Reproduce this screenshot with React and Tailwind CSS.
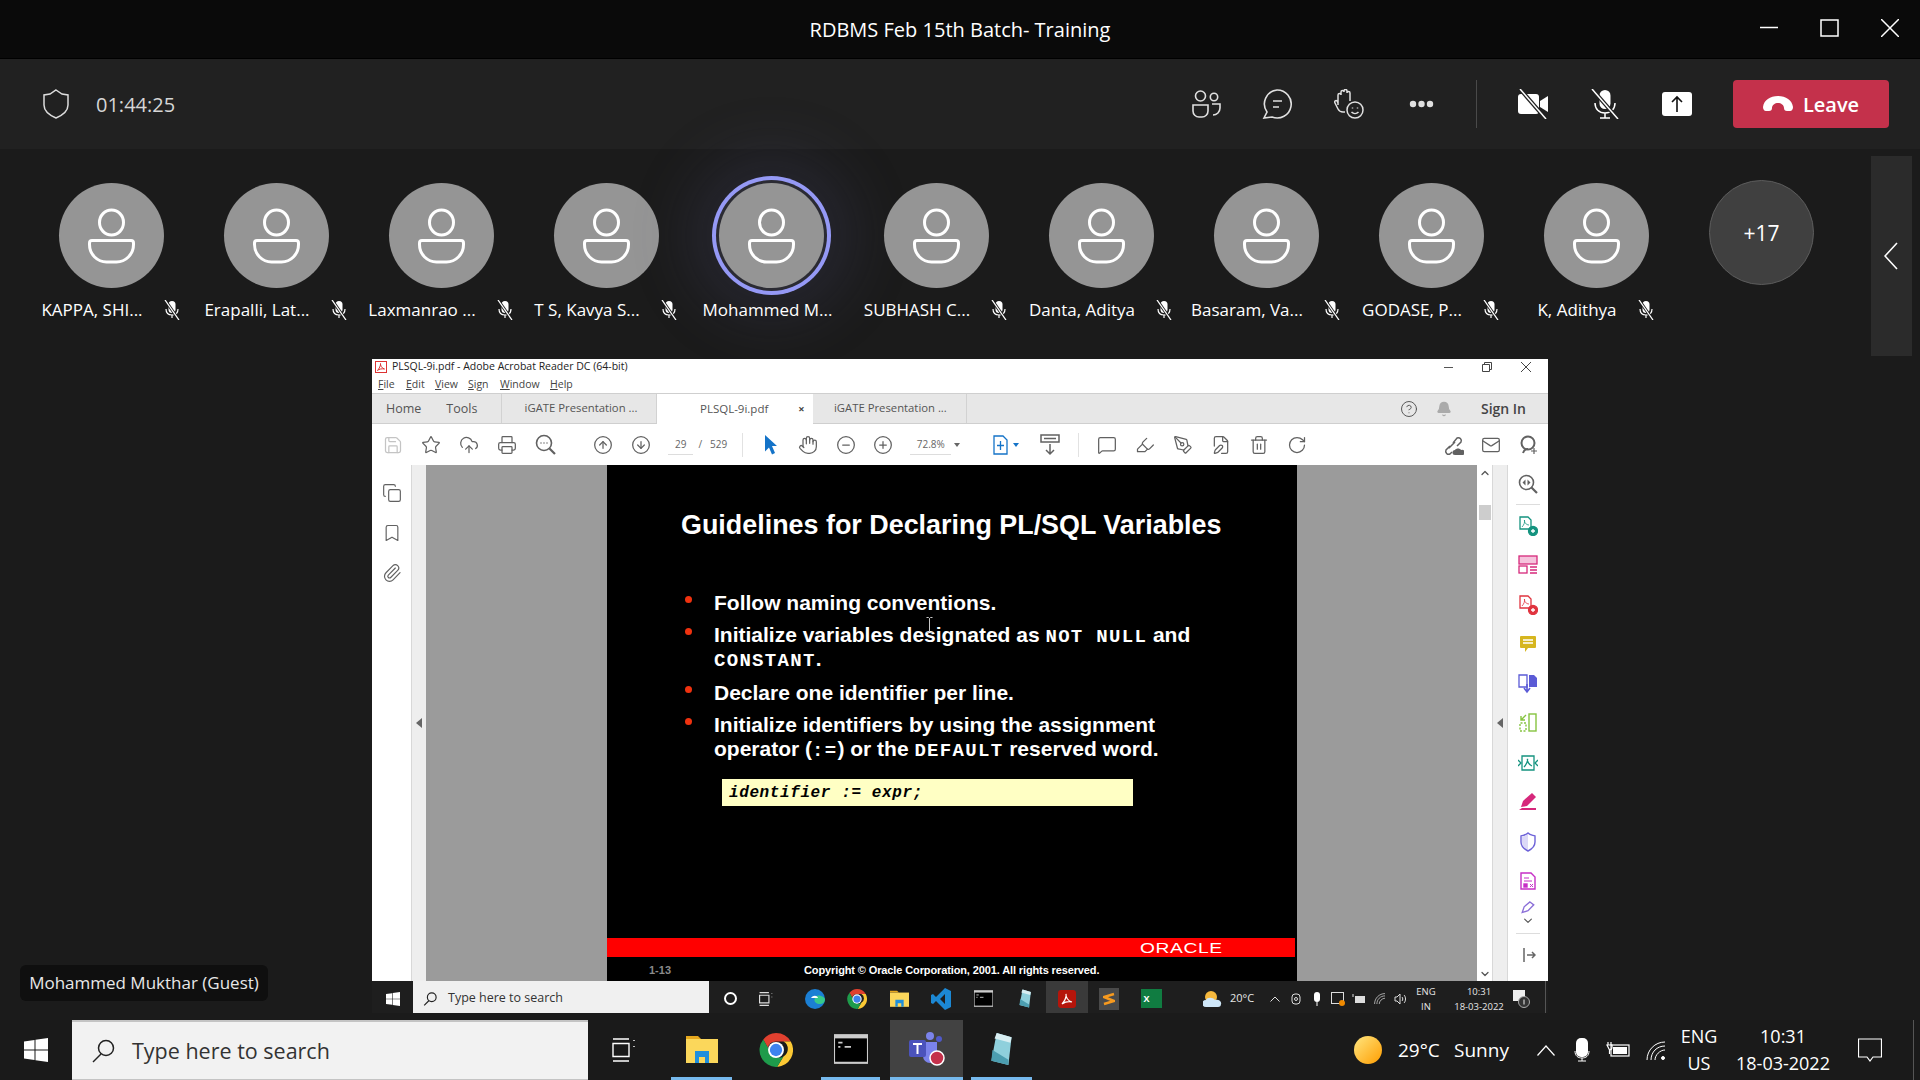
import {
  Save, Star, CloudUpload, Printer, CircleArrowUp, CircleArrowDown, Hand, CircleMinus, CirclePlus,
  MessageSquare, Highlighter, PenTool, FilePen, Trash2, RotateCw, Mail, CircleHelp, Bell, Copy, Bookmark, Paperclip,
  ChevronUp, ChevronDown,
} from 'lucide-react';

const people = ['KAPPA, SHI...', 'Erapalli, Lat...', 'Laxmanrao ...', 'T S, Kavya S...', 'Mohammed M...', 'SUBHASH C...', 'Danta, Aditya', 'Basaram, Va...', 'GODASE, P...', 'K, Adithya'];

function PersonIcon() {
  return (
    <svg width="105" height="105" viewBox="0 0 105 105" fill="none" stroke="#fff" strokeWidth="3">
      <ellipse cx="52.500" cy="39.500" rx="12" ry="12.500" />
      <path d="M33 57.500h39a2.500 2.500 0 0 1 2.500 2.500v1.500c0 10-8 17.500-17 17.500h-10c-9 0-17-7.500-17-17.500V60a2.500 2.500 0 0 1 2.500-2.500z" />
    </svg>
  );
}

function MicSmall() {
  return (
    <svg width="20" height="20" viewBox="0 0 20 20" className="shrink-0">
      <rect x="6.500" y="1" width="7" height="12" rx="3.500" fill="#fff" />
      <path d="M4 9c0 4 2.500 6 6 6s6-2 6-6M10 15v3" fill="none" stroke="#fff" strokeWidth="1.200" />
      <path d="M3 0l14 20" stroke="#1b1b1b" strokeWidth="3" />
      <path d="M3 0l14 20" stroke="#fff" strokeWidth="1.300" />
    </svg>
  );
}

function Participant({ name, active }) {
  return (
    <div className="w-[165px] shrink-0 flex flex-col items-center pt-[34px]">
      <div className={`w-[105px] h-[105px] rounded-full bg-[#959595] ${active ? 'shadow-[0_0_0_3px_#2b2b33,0_0_0_7px_#9599f5,0_0_60px_32px_rgba(90,90,140,0.18)]' : ''}`}>
        <PersonIcon />
      </div>
      <div className={`mt-[12px] h-[20px] flex items-center gap-[19px] text-[17px] text-white whitespace-nowrap ${active ? 'pr-[8px]' : ''}`}>
        <span>{name}</span>
        {!active && <MicSmall />}
      </div>
    </div>
  );
}

function TitleBar() {
  return (
    <div className="relative h-[59px] bg-[#0a0a0a] border-b border-black flex items-center justify-center">
      <span className="pt-[2px] text-[20px] text-white">RDBMS Feb 15th Batch- Training</span>
      <div className="absolute right-[21px] top-[19px] flex items-start gap-[42px]">
        <svg width="18" height="18" viewBox="0 0 18 18" stroke="#fff" strokeWidth="1.500"><path d="M0 8.500h18" /></svg>
        <svg width="19" height="18" viewBox="0 0 19 18" fill="none" stroke="#fff" strokeWidth="1.500"><rect x="1" y="1" width="17" height="16" /></svg>
        <svg width="18" height="18" viewBox="0 0 18 18" stroke="#fff" strokeWidth="1.500"><path d="M0 0l18 18M18 0L0 18" /></svg>
      </div>
    </div>
  );
}

function ToolBar() {
  return (
    <div className="h-[90px] bg-[#212121] flex items-center pl-[43px] pr-[31px]">
      <svg width="26" height="30" viewBox="0 0 26 30" fill="none" stroke="#dcdcdc" strokeWidth="1.500">
        <path d="M13 1l6 4 6 1v10c0 6-5 10-12 13C6 26 1 22 1 16V6l6-1z" />
      </svg>
      <span className="ml-[27px] pt-[2px] text-[20px] text-[#d6d6d6]">01:44:25</span>
      <div className="ml-auto flex items-center">
        <svg width="30" height="28" viewBox="0 0 30 28" fill="none" stroke="#e0e0e0" strokeWidth="1.600">
          <circle cx="9.500" cy="6" r="5" /><circle cx="23" cy="7" r="3.700" />
          <path d="M2 15h15v6a6 6 0 0 1-6 6H8a6 6 0 0 1-6-6zM21 14h8v4a7 7 0 0 1-7 7" />
        </svg>
        <svg className="ml-[41px]" width="30" height="30" viewBox="0 0 30 30" fill="none" stroke="#e0e0e0" strokeWidth="1.600">
          <path d="M15 1a14 14 0 1 1-5 27l-8 1 3-6A14 14 0 0 1 15 1zM11 12h9M11 18h6" />
        </svg>
        <svg className="ml-[42px]" width="30" height="30" viewBox="0 0 30 30" fill="none" stroke="#e0e0e0" strokeWidth="1.500">
          <path d="M4 16V6a1.500 1.500 0 0 1 3 0V3a1.500 1.500 0 0 1 3 0V2a1.500 1.500 0 0 1 3 0v2a1.500 1.500 0 0 1 3 0v8M4 14l-1-2c-1-1-3 0-2 2l3 6c1 2 3 3 5 3h2" />
          <circle cx="21" cy="21" r="8" /><path d="M17.500 23c2 2 5 2 7 0M18.500 18.500v1M23.500 18.500v1" />
        </svg>
        <svg className="ml-[45px]" width="25" height="8" viewBox="0 0 25 8" fill="#e0e0e0">
          <circle cx="4" cy="4" r="3.200" /><circle cx="12.500" cy="4" r="3.200" /><circle cx="21" cy="4" r="3.200" />
        </svg>
        <div className="ml-[42px] w-px h-[48px] bg-[#4a4a4a]" />
        <svg className="ml-[41px]" width="30" height="30" viewBox="0 0 30 30">
          <rect x="0" y="5" width="21" height="20" rx="3" fill="#fff" />
          <path d="M22 12l8-5v16l-8-5z" fill="#fff" />
          <path d="M2 0l26 30" stroke="#212121" strokeWidth="4" />
          <path d="M2 0l26 30" stroke="#fff" strokeWidth="1.500" />
        </svg>
        <svg className="ml-[42px]" width="30" height="30" viewBox="0 0 30 30">
          <rect x="9.500" y="1" width="11" height="19" rx="5.500" fill="#fff" />
          <path d="M5 14c0 6 4 10 10 10s10-4 10-10M15 24v5M10 29h10" fill="none" stroke="#fff" strokeWidth="1.500" />
          <path d="M2 0l26 30" stroke="#212121" strokeWidth="4" />
          <path d="M2 0l26 30" stroke="#fff" strokeWidth="1.500" />
        </svg>
        <svg className="ml-[42px]" width="30" height="24" viewBox="0 0 30 24">
          <rect width="30" height="24" rx="3" fill="#fff" />
          <path d="M15 20V5M10 10l5-5 5 5" fill="none" stroke="#111" strokeWidth="1.600" />
        </svg>
        <button className="ml-[41px] w-[156px] h-[48px] rounded-[4px] bg-[#c4314b] flex items-center justify-center gap-[10px] text-[20px] font-semibold text-white">
          <svg width="30" height="16" viewBox="0 0 30 16" fill="#fff">
            <path d="M0 11C1 4 7 0 15 0s14 4 15 11c0 2-1 4-3 4h-3c-2 0-3-1-3-3 0-3-3-5-6-5s-6 2-6 5c0 2-1 3-3 3H3c-2 0-3-2-3-4z" />
          </svg>
          <span className="pt-[2px]">Leave</span>
        </button>
      </div>
    </div>
  );
}

function ParticipantRow() {
  return (
    <div className="h-[210px] flex items-start pl-[29px] pr-[8px]">
      {people.map((p, i) => <Participant key={p} name={p} active={i === 4} />)}
      <div className="w-[165px] shrink-0 flex justify-center pt-[31px]">
        <div className="w-[105px] h-[105px] pt-[3px] rounded-full bg-[#404040] border border-[#5c5c5c] flex items-center justify-center text-[21px] text-white">+17</div>
      </div>
      <div className="ml-auto mt-[7px] w-[41px] h-[200px] bg-[#2b2b2b] flex items-center justify-center pr-[2px]">
        <svg width="14" height="28" viewBox="0 0 14 28" fill="none" stroke="#fff" strokeWidth="1.600"><path d="M13 1L1 14l12 13" /></svg>
      </div>
    </div>
  );
}

function PdfMark({ size = 12 }) {
  return (
    <svg width={size} height={size} viewBox="0 0 12 12">
      <rect x="0.500" y="0.500" width="11" height="11" fill="#fff" stroke="#d33" />
      <path d="M2.500 9.500C4 8 6 4 5.500 2.500 5 4 7 7.500 9.500 8 7 7.500 4 8 2.500 9.500z" fill="none" stroke="#d33" />
    </svg>
  );
}

function TbIcon({ icon: Icon, dim }) {
  return (
    <div className="w-[38px] shrink-0 flex justify-center">
      <Icon size={20} strokeWidth={1.500} className={dim ? 'text-[#c4c4c4]' : 'text-[#616161]'} />
    </div>
  );
}

function SearchDots() {
  return (
    <div className="w-[38px] shrink-0 flex justify-center">
      <svg width="21" height="21" viewBox="0 0 21 21" fill="none" stroke="#616161" strokeWidth="1.600">
        <circle cx="9" cy="9" r="7.500" /><path d="M14.500 14.500L20 20" strokeWidth="2.200" /><path d="M5.500 9h1M8.500 9h1M11.500 9h1" />
      </svg>
    </div>
  );
}

function LinkCloud() {
  return (
    <div className="w-[38px] shrink-0 flex justify-center">
      <svg width="22" height="22" viewBox="0 0 22 22" fill="none" stroke="#616161" strokeWidth="1.500">
        <path d="M8 12l-4 4a3 3 0 0 0 4 4l2-2M11 9l4-5a3 3 0 0 1 4 4l-4 4M7 14l6-6" />
        <path d="M13 21a2.500 2.500 0 0 1 0-5c1-2 5-2 6 0a2.500 2.500 0 0 1 2 5z" fill="#616161" stroke="none" />
      </svg>
    </div>
  );
}

function PdfToolbar() {
  return (
    <div className="h-[41px] bg-white flex items-center pl-[2px] text-[10px] text-[#666]">
      <TbIcon icon={Save} dim />
      <TbIcon icon={Star} />
      <TbIcon icon={CloudUpload} />
      <TbIcon icon={Printer} />
      <SearchDots />
      <div className="w-[20px] shrink-0" />
      <TbIcon icon={CircleArrowUp} />
      <TbIcon icon={CircleArrowDown} />
      <div className="w-[8px] shrink-0" />
      <span className="w-[26px] text-center border-b border-[#ddd] leading-[20px]">29</span>
      <span className="ml-[5px]">/</span>
      <span className="ml-[8px]">529</span>
      <div className="ml-[15px] w-px h-[24px] bg-[#e2e2e2]" />
      <div className="w-[9px] shrink-0" />
      <div className="w-[37px] shrink-0 flex justify-center">
        <svg width="14" height="20" viewBox="0 0 14 20" fill="#1473c8"><path d="M1 0l12 11H8l3 7-3 1.500-3-7-4 4z" /></svg>
      </div>
      <TbIcon icon={Hand} />
      <TbIcon icon={CircleMinus} />
      <div className="-ml-px" />
      <TbIcon icon={CirclePlus} />
      <span className="ml-[8px] w-[42px] text-center border-b border-[#ddd] leading-[20px]">72.8%</span>
      <span className="ml-[3px] w-0 h-0 border-x-[3px] border-x-transparent border-t-[4px] border-t-[#666]" />
      <div className="ml-[30px] w-[20px] flex justify-center">
        <svg width="15" height="20" viewBox="0 0 15 20" fill="none" stroke="#1473c8" strokeWidth="1.300">
          <path d="M1 1h9l4 4v14H1zM7.500 6v9M4 10.500h7" />
        </svg>
      </div>
      <span className="ml-[3px] w-0 h-0 border-x-[3px] border-x-transparent border-t-[4px] border-t-[#1473c8]" />
      <div className="ml-[13px] w-[38px] flex justify-center">
        <svg width="20" height="22" viewBox="0 0 20 22" fill="none" stroke="#616161" strokeWidth="1.500">
          <rect x="1" y="1" width="18" height="7" /><path d="M4 4.500h12M10 10v10M6 16l4 4 4-4" />
        </svg>
      </div>
      <div className="ml-[9px] w-px h-[24px] bg-[#e2e2e2]" />
      <div className="w-[9px] shrink-0" />
      <TbIcon icon={MessageSquare} />
      <TbIcon icon={Highlighter} />
      <TbIcon icon={PenTool} />
      <TbIcon icon={FilePen} />
      <TbIcon icon={Trash2} />
      <TbIcon icon={RotateCw} />
      <div className="w-[118px] shrink-0" />
      <LinkCloud />
      <TbIcon icon={Mail} />
      <div className="w-[38px] shrink-0 flex justify-center">
        <svg width="20" height="20" viewBox="0 0 20 20" fill="none" stroke="#616161" strokeWidth="2">
          <circle cx="9" cy="8" r="6.500" /><path d="M4 18c1-3 3-4 5-4" /><path d="M15 13v6M12 16h6" strokeWidth="1.200" />
        </svg>
      </div>
    </div>
  );
}

function RightTool({ children }) {
  return <div className="h-[39.500px] flex items-center justify-center">{children}</div>;
}

function RightPanel() {
  return (
    <div className="w-[40px] bg-white flex flex-col items-stretch pt-[7px]">
      <div className="h-[24px] flex items-center justify-center">
        <svg width="20" height="20" viewBox="0 0 20 20" fill="none" stroke="#616161" strokeWidth="1.600">
          <circle cx="8.500" cy="8.500" r="7" /><path d="M13.500 13.500L19 19" strokeWidth="2.200" /><path d="M7.500 5.500l-3 3 3 3zM9.500 5.500l3 3-3 3z" fill="#616161" stroke="none" />
        </svg>
      </div>
      <div className="mx-[8px] mt-[8px] mb-[1px] h-px bg-[#ddd]" />
      <RightTool>
        <svg width="20" height="20" viewBox="0 0 20 20" fill="none" stroke="#14937f" strokeWidth="1.300"><path d="M2 1h8l3 3v9H2z" /><path d="M4 11c2-2 3-5 2.500-7C6 6 8 9 11 9" strokeWidth="0.800" /><circle cx="15" cy="15" r="4.500" fill="#14937f" /><path d="M13 15h4M15 13v4" stroke="#fff" /></svg>
      </RightTool>
      <RightTool>
        <svg width="20" height="20" viewBox="0 0 20 20" fill="none" stroke="#d6287b" strokeWidth="1.300"><rect x="1" y="1" width="18" height="8" fill="#f5c3dc" /><rect x="1" y="11" width="8" height="7" /><path d="M12 12h7M12 15h7M12 18h7" /></svg>
      </RightTool>
      <RightTool>
        <svg width="20" height="20" viewBox="0 0 20 20" fill="none" stroke="#e0343f" strokeWidth="1.300"><path d="M2 1h8l3 3v9H2z" /><path d="M4 11c2-2 3-5 2.500-7C6 6 8 9 11 9" strokeWidth="0.800" /><circle cx="15" cy="15" r="4.500" fill="#e0343f" /><path d="M13 15h4M15 13v4" stroke="#fff" /></svg>
      </RightTool>
      <RightTool>
        <svg width="18" height="18" viewBox="0 0 18 18"><path d="M2 1h14a1 1 0 0 1 1 1v10a1 1 0 0 1-1 1H9l-3 4v-4H2a1 1 0 0 1-1-1V2a1 1 0 0 1 1-1z" fill="#d6b61f" /><path d="M4 5h10M4 8h10" stroke="#fff" strokeWidth="1.500" /></svg>
      </RightTool>
      <RightTool>
        <svg width="20" height="20" viewBox="0 0 20 20"><path d="M1 1h8v12H1z" fill="#fff" stroke="#5b5bd6" strokeWidth="1.300" /><path d="M11 1h5l3 3v9h-8z" fill="#5b5bd6" /><path d="M9 10v7M6 14l3 4 3-4" fill="none" stroke="#5b5bd6" strokeWidth="1.600" /></svg>
      </RightTool>
      <RightTool>
        <svg width="20" height="20" viewBox="0 0 20 20" fill="none" stroke="#86c440" strokeWidth="1.400"><rect x="11" y="1" width="7" height="17" /><path d="M8 10H2v8h6z" strokeDasharray="2 1.500" /><path d="M8 2L3 7M3 3v4h4" /></svg>
      </RightTool>
      <RightTool>
        <svg width="20" height="20" viewBox="0 0 20 20" fill="none" stroke="#14937f" strokeWidth="1.300"><path d="M4 3h12v14H4z" /><path d="M6 14c2-2 4-6 3.500-8C9 8 11 12 14 13" /><path d="M0 7l3 3-3 3M20 7l-3 3 3 3" /></svg>
      </RightTool>
      <RightTool>
        <svg width="20" height="18" viewBox="0 0 20 18"><path d="M14 0l4 4-9 9-6 1 2-6z" fill="#d6287b" /><path d="M1 17l3-2h14v2z" fill="#d6287b" /></svg>
      </RightTool>
      <RightTool>
        <svg width="16" height="20" viewBox="0 0 16 20" fill="none" stroke="#6d62d8" strokeWidth="1.400"><path d="M8 2v16c-4-2-6-5-6-8V5z" fill="#dcd9f7" stroke="none" /><path d="M8 1c2 2 4 2 7 3v6c0 4-3 7-7 9-4-2-7-5-7-9V4c3-1 5-1 7-3z" /></svg>
      </RightTool>
      <RightTool>
        <svg width="16" height="18" viewBox="0 0 16 18" fill="none" stroke="#c62fc6" strokeWidth="1.400"><path d="M1 1h10l4 4v12H1z" /><path d="M4 6h5M4 9h8" strokeWidth="1" /><rect x="4" y="12" width="3" height="3" fill="#c62fc6" /><path d="M10 12l3 3M13 12l-3 3" strokeWidth="1" /></svg>
      </RightTool>
      <div className="h-[26px] flex flex-col items-center">
        <svg width="16" height="13" viewBox="0 0 16 13"><path d="M10 1l4 3-6 6-6 2 2-6z" fill="none" stroke="#8b6fd8" strokeWidth="1.400" /></svg>
        <ChevronDown size={14} className="text-[#555]" />
      </div>
      <div className="mx-[8px] mt-[6px] h-px bg-[#ddd]" />
      <div className="flex-1 flex items-start justify-center pt-[14px] pl-[2px]">
        <svg width="14" height="14" viewBox="0 0 14 14" fill="none" stroke="#666" strokeWidth="1.500"><path d="M2 0v14M5 7h8M10 4l3 3-3 3" /></svg>
      </div>
    </div>
  );
}

function Slide() {
  const bullet = 'absolute left-[-29px] top-[5px] w-[7px] h-[7px] rounded-full bg-[#f0320f]';
  const mono = 'font-["Liberation_Mono",monospace] text-[19px] leading-none tracking-[1.300px]';
  return (
    <div className="relative w-[690px] bg-black flex flex-col font-['Liberation_Sans',sans-serif] text-white font-bold">
      <h1 className="ml-[74px] mt-[45px] text-[26.900px] leading-[30px] whitespace-nowrap">Guidelines for Declaring PL/SQL Variables</h1>
      <ul className="ml-[107px] mt-[51px] text-[21px] flex flex-col gap-[8px]">
        <li className="relative leading-[24px]"><span className={bullet} />Follow naming conventions.</li>
        <li className="relative leading-[24px]"><span className={bullet} />Initialize variables designated as <span className={mono}>NOT NULL</span> and<br /><span className={mono}>CONSTANT</span>.</li>
        <li className="relative leading-[24px] mt-[2px]"><span className={bullet} />Declare one identifier per line.</li>
        <li className="relative leading-[24px]"><span className={bullet} />Initialize identifiers by using the assignment<br />operator (<span className={mono}>:=</span>) or the <span className={mono}>DEFAULT</span> reserved word.</li>
      </ul>
      <div className="ml-[115px] mt-[18px] w-[411px] h-[27px] pt-[1px] bg-[#ffffc4] pl-[7px] text-black text-[16px] leading-[27px] italic tracking-[0.6px] font-['Liberation_Mono',monospace]">identifier := expr;</div>
      <div className="mt-auto mr-[2px] h-[19px] bg-[#ff0000] flex items-center justify-end pr-[72px]">
        <span className="text-[15px] leading-none text-white font-normal scale-x-[1.280] origin-right tracking-[0.5px]">ORACLE</span>
      </div>
      <div className="h-[24px] pt-[3px] flex items-center text-[11px] pl-[42px]">
        <span className="text-[#8a8a8a]">1-13</span>
        <span className="ml-[133px] tracking-[-0.12px]">Copyright © Oracle Corporation, 2001. All rights reserved.</span>
      </div>
      <div className="absolute left-[319px] top-[152px]">
        <svg width="7" height="16" viewBox="0 0 7 16" fill="none" stroke="#c8c8c8" strokeWidth="1"><path d="M0.500 0.500h2l1 1 1-1h2M3.500 1.500v13M0.500 15.500h2l1-1 1 1h2" /></svg>
      </div>
    </div>
  );
}

function PdfWindow() {
  return (
    <div className="flex-1 flex flex-col font-['Open_Sans',sans-serif]">
      <div className="h-[16px] bg-white flex items-center pl-[3px] text-[10.500px] text-[#222] relative">
        <PdfMark />
        <span className="ml-[5px]">PLSQL-9i.pdf - Adobe Acrobat Reader DC (64-bit)</span>
        <div className="ml-auto flex items-center gap-[29px] pr-[17px] text-[#444]">
          <span className="w-[9px] h-px bg-[#555]" />
          <svg width="10" height="10" viewBox="0 0 10 10" fill="none" stroke="#444"><path d="M0.500 2.500h7v7h-7zM2.500 2.500v-2h7v7h-2" /></svg>
          <svg width="10" height="10" viewBox="0 0 10 10" stroke="#444"><path d="M0 0l10 10M10 0L0 10" /></svg>
        </div>
      </div>
      <div className="h-[18px] pt-[1px] bg-white flex items-center pl-[6px] text-[10.500px] text-[#444]">
        <span className="w-[28px]"><u>F</u>ile</span>
        <span className="w-[29px]"><u>E</u>dit</span>
        <span className="w-[33px]"><u>V</u>iew</span>
        <span className="w-[32px]"><u>S</u>ign</span>
        <span className="w-[50px]"><u>W</u>indow</span>
        <span><u>H</u>elp</span>
      </div>
      <div className="h-[31px] bg-[#e7e7e7] border-y border-[#cfcfcf] flex items-stretch text-[12.500px] text-[#555]">
        <div className="w-[130px] pt-[1px] flex items-center pl-[14px] gap-[25px] border-r border-[#d2d2d2]"><span>Home</span><span>Tools</span></div>
        <div className="w-[155px] flex items-center justify-center pl-[4px] text-[11.300px] border-r border-[#d2d2d2]">iGATE Presentation ...</div>
        <div className="w-[156px] -mb-px bg-white flex items-center pl-[43px] text-[11.500px]">
          <span>PLSQL-9i.pdf</span>
          <span className="ml-[30px] text-[#444] text-[11px] font-bold">×</span>
        </div>
        <div className="w-[154px] flex items-center pl-[21px] text-[11.300px] border-r border-[#d2d2d2]">iGATE Presentation ...</div>
        <div className="ml-auto flex items-center pr-[22px]">
          <CircleHelp size={18} strokeWidth={1.300} className="text-[#555]" />
          <Bell size={16} className="ml-[18px] text-[#aaa]" fill="#aaa" />
          <span className="ml-[29px] text-[14px] font-semibold text-[#444]">Sign In</span>
        </div>
      </div>
      <PdfToolbar />
      <div className="flex-1 flex">
        <div className="w-[39px] bg-white flex flex-col items-center pt-[18px] gap-[20px] text-[#616161]">
          <Copy size={20} strokeWidth={1.400} />
          <Bookmark size={20} strokeWidth={1.400} />
          <Paperclip size={20} strokeWidth={1.400} />
        </div>
        <div className="w-[15px] bg-[#eeeeee] border-l border-[#d8d8d8] flex items-center justify-center">
          <span className="w-0 h-0 border-y-[5px] border-y-transparent border-r-[6px] border-r-[#666]" />
        </div>
        <div className="w-[181px] bg-[#9b9b9b]" />
        <Slide />
        <div className="w-[180px] bg-[#9b9b9b]" />
        <div className="relative w-[15px] bg-white flex flex-col items-center justify-between text-[#555]">
          <ChevronUp size={12} strokeWidth={2.500} className="mt-[2px]" />
          <div className="absolute top-[40px] w-[12px] h-[15px] bg-[#cdcdcd]" />
          <ChevronDown size={12} strokeWidth={2.500} className="mb-[1px]" />
        </div>
        <div className="w-[16px] bg-[#eeeeee] border-x border-[#d8d8d8] flex items-center justify-center">
          <span className="w-0 h-0 border-y-[5px] border-y-transparent border-r-[6px] border-r-[#666]" />
        </div>
        <RightPanel />
      </div>
    </div>
  );
}

function WinLogo({ size }) {
  return (
    <svg width={size} height={size} viewBox="0 0 24 24" fill="#fff">
      <path d="M0 3.500l10.500-1.500v9.500H0zM11.500 1.800L24 0v11.500H11.500zM0 12.500h10.500V22L0 20.500zM11.500 12.500H24V24l-12.500-1.800z" />
    </svg>
  );
}

function ChromeIcon({ size }) {
  return (
    <svg width={size} height={size} viewBox="0 0 32 32">
      <path d="M16 0a16 16 0 0 1 13.900 8H16a8 8 0 0 0-7.700 5.800L4 6A16 16 0 0 1 16 0z" fill="#e0402f" />
      <path d="M29.900 8A16 16 0 0 1 17 32l6-10a8 8 0 0 0 0-14z" fill="#fcc934" />
      <path d="M4 6l7.500 13a8 8 0 0 0 11.500 3l-6 10A16 16 0 0 1 4 6z" fill="#1e9b4b" />
      <circle cx="16" cy="16" r="7.500" fill="#fff" />
      <circle cx="16" cy="16" r="5.800" fill="#3f83ee" />
    </svg>
  );
}

function FolderIcon({ size }) {
  return (
    <svg width={size} height={size} viewBox="0 0 32 32">
      <path d="M0 3h12l3 3H0z" fill="#e6a81e" />
      <rect y="6" width="32" height="24" fill="#fbd75b" />
      <path d="M9 30V18h14v12h-4v-6h-6v6z" fill="#1f8fdc" />
    </svg>
  );
}

function CmdIcon({ size }) {
  return (
    <svg width={size} height={size} viewBox="0 0 32 32">
      <rect y="2" width="32" height="28" fill="#ccc" />
      <rect x="1" y="6" width="30" height="22" fill="#000" />
      <path d="M4 10h4M4 14h2M10 14h6" stroke="#ccc" strokeWidth="1.500" />
    </svg>
  );
}

function NotepadIcon({ size }) {
  return (
    <svg width={size} height={size} viewBox="0 0 32 32">
      <path d="M11 1l14 4-3 26-16-4z" fill="#8fd0dc" />
      <path d="M11 1l14 4-1 5-15-4z" fill="#d8eef2" />
      <path d="M7 17l15 9v5l-16-4z" fill="#4c9eb0" />
    </svg>
  );
}

function Taskbar() {
  return (
    <div className="h-[60px] bg-[#1a1a1a] flex items-center text-white text-[18px]">
      <div className="w-[72px] shrink-0 flex justify-center"><WinLogo size={24} /></div>
      <div className="w-[516px] shrink-0 h-full bg-[#f2f2f2] border-t-[2px] border-b-[1px] border-t-[#c4c4c4] border-b-[#c4c4c4] flex items-center pl-[19px]">
        <svg width="24" height="24" viewBox="0 0 24 24" fill="none" stroke="#222" strokeWidth="1.500"><circle cx="15" cy="9" r="7.500" /><path d="M10 15L2 23" /></svg>
        <span className="ml-[17px] pt-[2px] text-[21.500px] text-[#333]">Type here to search</span>
      </div>
      <div className="w-[72px] shrink-0 flex justify-center">
        <svg width="24" height="24" viewBox="0 0 24 24" fill="none" stroke="#fff" strokeWidth="1.400"><path d="M1 1h16M1 5.500h16v13H1zM1 23h16M22 2v1M22 8v1" /></svg>
      </div>
      <div className="ml-[11px] w-[61px] h-full flex items-center justify-center border-b-[3px] border-[#76b9ed]"><FolderIcon size={32} /></div>
      <div className="ml-[14px] w-[60px] h-full flex items-center justify-center"><ChromeIcon size={34} /></div>
      <div className="ml-[15px] w-[59px] h-full flex items-center justify-center border-b-[3px] border-[#76b9ed]"><CmdIcon size={34} /></div>
      <div className="ml-[10px] w-[73px] h-full flex items-center justify-center bg-[#424242] border-b-[3px] border-[#76b9ed]">
        <svg width="36" height="36" viewBox="0 0 36 36">
          <circle cx="21" cy="5" r="4" fill="#7b83eb" /><circle cx="30" cy="8" r="3" fill="#5059c9" />
          <path d="M14 11h14v14a7 7 0 0 1-14 0z" fill="#7b83eb" />
          <rect y="9" width="17" height="17" rx="2" fill="#4b53bc" />
          <path d="M4 13h9M8.500 13v10" stroke="#fff" strokeWidth="2" />
          <circle cx="28" cy="27" r="7" fill="#c4314b" stroke="#fff" strokeWidth="1.500" />
        </svg>
      </div>
      <div className="ml-[8px] w-[61px] h-full flex items-center justify-center border-b-[3px] border-[#76b9ed]"><NotepadIcon size={34} /></div>
      <div className="ml-[322px] w-[28px] h-[28px] rounded-full bg-[linear-gradient(135deg,#ffe680,#ff9d00)]" />
      <span className="ml-[16px] w-[56px] text-[19px]">29°C</span>
      <span className="w-[70px] text-[19px]">Sunny</span>
      <svg className="ml-[13px]" width="18" height="11" viewBox="0 0 18 11" fill="none" stroke="#fff" strokeWidth="1.200"><path d="M0.500 10.500L9 1l8.500 9.500" /></svg>
      <svg className="ml-[19px]" width="16" height="24" viewBox="0 0 16 24">
        <rect x="2" y="0" width="12" height="19" rx="5" fill="#fff" />
        <path d="M1 13c0 5 3 7 7 7s7-2 7-7M8 20v3M4 23h8" fill="none" stroke="#fff" />
      </svg>
      <svg className="ml-[16px]" width="24" height="16" viewBox="0 0 24 16" fill="none" stroke="#fff" strokeWidth="1.200">
        <rect x="5" y="3" width="18" height="11" /><rect x="7" y="5" width="14" height="7" fill="#fff" stroke="none" /><path d="M2 0v3M5 0v3M1 3h5v2c0 2-1 3-2.500 3zM3.500 8v4" />
      </svg>
      <svg className="ml-[16px]" width="19" height="19" viewBox="0 0 19 19" fill="none" stroke="#fff" strokeWidth="1">
        <path d="M1 19C1 9 9 1 19 1M5 19c0-8 6-14 14-14M9 19c0-5 5-10 10-10" /><circle cx="17" cy="17" r="1.500" fill="#fff" />
      </svg>
      <div className="ml-[9px] w-[50px] flex flex-col items-center leading-[27px]"><span>ENG</span><span>US</span></div>
      <div className="ml-[9px] w-[100px] flex flex-col items-center leading-[27px]"><span>10:31</span><span>18-03-2022</span></div>
      <svg className="ml-[25px]" width="24" height="24" viewBox="0 0 24 24" fill="none" stroke="#fff" strokeWidth="1.200"><path d="M0.500 1h23v18H15l-3 4-3-4H0.500z" /></svg>
      <div className="ml-[31px] w-px h-full bg-[#555]" />
    </div>
  );
}

function InnerTaskbar() {
  const cell = 'w-[42px] h-[32px] shrink-0 flex items-center justify-center';
  const tray = 'w-[21px] shrink-0 flex justify-center';
  return (
    <div className="h-[32px] pt-[3px] bg-[#1e1e1e] flex items-center text-[#e6e6e6] text-[10px] font-['Open_Sans',sans-serif]">
      <div className="w-[41px] shrink-0 flex justify-center"><WinLogo size={14} /></div>
      <div className="w-[296px] shrink-0 h-[32px] -mt-[3px] pt-[3px] bg-[#f0f0f0] flex items-center pl-[10px] text-[#333] text-[12.500px]">
        <svg width="14" height="14" viewBox="0 0 24 24" fill="none" stroke="#222" strokeWidth="2"><circle cx="15" cy="9" r="7.500" /><path d="M10 15L2 23" /></svg>
        <span className="ml-[11px]">Type here to search</span>
      </div>
      <div className="ml-[3px] w-[36px] shrink-0 flex justify-center"><span className="w-[13px] h-[13px] rounded-full border-[2px] border-white" /></div>
      <div className="w-[36px] shrink-0 flex justify-center">
        <svg width="14" height="14" viewBox="0 0 24 24" fill="none" stroke="#ddd" strokeWidth="2"><path d="M1 1h16M1 5.500h16v13H1zM1 23h16M22 2v1M22 8v1" /></svg>
      </div>
      <div className="w-[10px] shrink-0" />
      <div className={cell}>
        <svg width="20" height="20" viewBox="0 0 20 20"><circle cx="10" cy="10" r="10" fill="#1b7fd4" /><path d="M20 11a5 5 0 0 1-5 4c-3 0-7-2-5-6 0-2 3-3 6-2 3 1 4 2 4 4z" fill="#37c98b" /><path d="M6 9c2-3 6-3 7 0H6z" fill="#fff" /></svg>
      </div>
      <div className={cell}><ChromeIcon size={20} /></div>
      <div className={cell}><FolderIcon size={19} /></div>
      <div className={cell}>
        <svg width="20" height="22" viewBox="0 0 20 22" fill="#1c88d4"><path d="M14 0l6 3v16l-6 3-9-9-3 3-2-1v-8l2-1 3 3zM14 6l-5 5 5 5z" /></svg>
      </div>
      <div className={cell}><CmdIcon size={19} /></div>
      <div className={cell}><NotepadIcon size={19} /></div>
      <div className={`${cell} -mt-[3px] pt-[3px] bg-[#3a3a3a]`}>
        <div className="w-[18px] h-[18px] rounded-[3px] bg-[#b5150b] flex items-center justify-center"><svg width="12" height="12" viewBox="0 0 12 12" fill="none" stroke="#fff" strokeWidth="1.200"><path d="M1 11c2-2 5-7 4-10-.5 3 2 7 6 8-4-1-7 0-10 2z" /></svg></div>
      </div>
      <div className={cell}>
        <div className="w-[20px] h-[22px] bg-[#4a4a4a] flex items-center justify-center"><svg width="12" height="14" viewBox="0 0 12 14" fill="none" stroke="#f79a1f" strokeWidth="2.500"><path d="M11 2L1 5l10 4-10 3" /></svg></div>
      </div>
      <div className={cell}>
        <div className="w-[21px] h-[19px] bg-[#107c41] flex items-center pl-[3px] text-[9px] font-bold text-white">X</div>
      </div>
      <svg className="ml-[31px] shrink-0" width="20" height="18" viewBox="0 0 20 18"><circle cx="8" cy="7" r="6" fill="#f5b83d" /><path d="M3 17a3.500 3.500 0 0 1 0-7c1-3 7-3 9 0 4-1 7 2 6 4 0 2-1 3-3 3z" fill="#cfe7f8" /></svg>
      <span className="ml-[7px] w-[34px] shrink-0 text-[11px]">20°C</span>
      <div className={tray}><svg width="10" height="6" viewBox="0 0 10 6" fill="none" stroke="#ddd"><path d="M0.500 5.500L5 1l4.500 4.500" /></svg></div>
      <div className={tray}><svg width="10" height="14" viewBox="0 0 10 14" fill="none" stroke="#ddd"><rect x="1" y="2" width="8" height="10" rx="3" /><circle cx="5" cy="7" r="1.500" /></svg></div>
      <div className={tray}><svg width="8" height="14" viewBox="0 0 8 14"><rect x="1" width="6" height="10" rx="3" fill="#fff" /><path d="M4 10v4" stroke="#fff" /></svg></div>
      <div className={tray}><svg width="14" height="14" viewBox="0 0 14 14"><rect x="0.500" y="0.500" width="12" height="11" fill="none" stroke="#ddd" /><circle cx="11" cy="11" r="3" fill="#f08a00" /></svg></div>
      <div className={tray}><svg width="13" height="10" viewBox="0 0 13 10"><rect x="3" y="2" width="10" height="7" fill="#ddd" /><path d="M1 0v3" stroke="#ddd" /></svg></div>
      <div className={tray}><svg width="11" height="11" viewBox="0 0 19 19" fill="none" stroke="#bbb" strokeWidth="1.500"><path d="M1 19C1 9 9 1 19 1M5 19c0-8 6-14 14-14M9 19c0-5 5-10 10-10" /></svg></div>
      <div className={tray}><svg width="13" height="12" viewBox="0 0 13 12" fill="none" stroke="#ddd"><path d="M1 4h2l3-3v10L3 8H1zM8 4c1 1 1 3 0 4M10 2c2 2 2 6 0 8" /></svg></div>
      <div className="w-[30px] shrink-0 flex flex-col items-center leading-[15px] text-[9.500px]"><span>ENG</span><span>IN</span></div>
      <div className="ml-[6px] w-[64px] shrink-0 flex flex-col items-center leading-[15px] text-[9.500px]"><span>10:31</span><span>18-03-2022</span></div>
      <div className="-ml-[2px] w-[24px] shrink-0 flex justify-center">
        <svg width="18" height="20" viewBox="0 0 18 20"><path d="M1 1h12v11H1z" fill="#eee" /><circle cx="12" cy="13" r="5.500" fill="#333" stroke="#aaa" /><path d="M12 10.500v5" stroke="#eee" /></svg>
      </div>
      <div className="ml-[12px] w-px h-[32px] -mt-[3px] bg-[#555]" />
    </div>
  );
}

export default function App() {
  return (
    <div className="relative w-[1920px] h-[1080px] overflow-hidden bg-[#1b1b1b] flex flex-col font-['Open_Sans',sans-serif]">
      <TitleBar />
      <ToolBar />
      <ParticipantRow />
      <div className="w-[1176px] h-[654px] mx-auto flex flex-col">
        <PdfWindow />
        <InnerTaskbar />
      </div>
      <div className="mt-[7px]"><Taskbar /></div>
      <div className="absolute left-[20px] top-[965px] h-[36px] w-[248px] rounded-[6px] bg-[#0f0f0f] flex items-center justify-center text-[17px] text-[#e8e8e8]">Mohammed Mukthar (Guest)</div>
    </div>
  );
}
